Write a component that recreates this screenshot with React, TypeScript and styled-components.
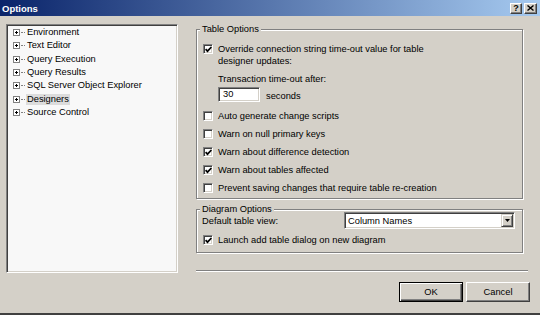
import React from 'react'
import styled, { createGlobalStyle, css } from 'styled-components'

const Face = '#d4d0c8'
const Shadow = '#808080'
const DarkShadow = '#404040'
const Light = '#ffffff'

const GlobalStyle = createGlobalStyle`
  html, body {
    margin: 0;
    padding: 0;
  }
  body {
    background: ${Face};
    font-family: "Liberation Sans", Arial, sans-serif;
    font-size: 9.3px;
    color: #000;
  }
`

const treeItems = [
  'Environment',
  'Text Editor',
  'Query Execution',
  'Query Results',
  'SQL Server Object Explorer',
  'Designers',
  'Source Control',
]

const tableChecks = [
  { label: 'Auto generate change scripts', checked: false },
  { label: 'Warn on null primary keys', checked: false },
  { label: 'Warn about difference detection', checked: true },
  { label: 'Warn about tables affected', checked: true },
  { label: 'Prevent saving changes that require table re-creation', checked: false },
]

export default function App() {
  return (
    <>
      <GlobalStyle />
      <Window>
        <TitleBar>
          <Title>Options</Title>
          <CaptionButtons>
            <CaptionButton $width={12}>
              <HelpGlyph>?</HelpGlyph>
            </CaptionButton>
            <CaptionButton $width={13}>
              <svg width="7" height="6" viewBox="0 0 7 6">
                <path d="M0.5 0.5 L6.5 5.5 M6.5 0.5 L0.5 5.5" stroke="#000" strokeWidth="1.4" />
              </svg>
            </CaptionButton>
          </CaptionButtons>
        </TitleBar>

        <Body>
          <Tree>
            {treeItems.map(item => (
              <TreeRow key={item}>
                <Expander>
                  <svg width="7" height="7" viewBox="0 0 7 7">
                    <rect x="0.5" y="0.5" width="6" height="6" fill="#fff" stroke={Shadow} />
                    <path d="M2 3.5 H5 M3.5 2 V5" stroke="#000" />
                  </svg>
                </Expander>
                <Connector />
                <TreeLabel $selected={item === 'Designers'}>{item}</TreeLabel>
              </TreeRow>
            ))}
          </Tree>

          <Pane>
            <Group $top={5} $padding="13px 0 4px 6px">
              <GroupTitle>Table Options</GroupTitle>
              <CheckRow>
                <CheckBox checked />
                <span>
                  Override connection string time-out value for table
                  <br />
                  designer updates:
                </span>
              </CheckRow>
              <Indented>
                <TimeoutLabel>Transaction time-out after:</TimeoutLabel>
                <TimeoutRow>
                  <TextField>30</TextField>
                  <span>seconds</span>
                </TimeoutRow>
              </Indented>
              <CheckList>
                {tableChecks.map(c => (
                  <CheckRow key={c.label}>
                    <CheckBox checked={c.checked} />
                    <span>{c.label}</span>
                  </CheckRow>
                ))}
              </CheckList>
            </Group>

            <Group $top={10} $padding="2px 0 6px 5px">
              <GroupTitle>Diagram Options</GroupTitle>
              <ViewRow>
                <span>Default table view:</span>
                <Combo>
                  <span>Column Names</span>
                  <ComboButton>
                    <svg width="5" height="3" viewBox="0 0 5 3">
                      <path d="M0 0 H5 L2.5 3 Z" fill="#000" />
                    </svg>
                  </ComboButton>
                </Combo>
              </ViewRow>
              <DiagramCheck>
                <CheckBox checked />
                <span>Launch add table dialog on new diagram</span>
              </DiagramCheck>
            </Group>

            <Separator />
          </Pane>
        </Body>

        <Footer>
          <PushButton $default $width={64}>OK</PushButton>
          <PushButton $width={64}>Cancel</PushButton>
        </Footer>
      </Window>
    </>
  )
}

function CheckBox({ checked }: { checked?: boolean }) {
  return (
    <Box>
      {checked && (
        <svg width="7" height="7" viewBox="0 0 7 7">
          <path d="M0.6 3.2 L2.5 5.2 L6.4 1" fill="none" stroke="#000" strokeWidth="1.7" />
        </svg>
      )}
    </Box>
  )
}

const sunken = css`
  border: 1px solid;
  border-color: ${Shadow} ${Light} ${Light} ${Shadow};
  box-shadow: inset 1px 1px 0 ${DarkShadow}, inset -1px -1px 0 ${Face};
`

const raised = css`
  border: 1px solid;
  border-color: ${Light} ${DarkShadow} ${DarkShadow} ${Light};
  box-shadow: inset -1px -1px 0 ${Shadow};
`

const Window = styled.div`
  width: 540px;
  height: 315px;
  box-sizing: border-box;
  display: flex;
  flex-direction: column;
  background: ${Face};
  border-bottom: 2px solid ${DarkShadow};
  overflow: hidden;
`

const TitleBar = styled.div`
  height: 16px;
  flex-shrink: 0;
  display: flex;
  align-items: center;
  padding: 0 3px 0 2px;
  background: linear-gradient(to right, #0a246a, #a6caf0);
`

const Title = styled.div`
  color: #fff;
  font-weight: bold;
  font-size: 9.5px;
`

const CaptionButtons = styled.div`
  margin-left: auto;
  display: flex;
  gap: 2px;
`

const CaptionButton = styled.div<{ $width: number }>`
  width: ${p => p.$width}px;
  height: 11px;
  box-sizing: border-box;
  display: flex;
  align-items: center;
  justify-content: center;
  background: ${Face};
  ${raised}
`

const HelpGlyph = styled.span`
  font-weight: bold;
  font-size: 9px;
  line-height: 9px;
`

const Body = styled.div`
  flex: 1;
  display: flex;
  gap: 18px;
  padding: 8px 12px 0 6px;
  min-height: 0;
`

const Tree = styled.div`
  width: 172px;
  box-sizing: border-box;
  background: #f8f8f8;
  padding: 1px 0 0 6px;
  ${sunken}
`

const TreeRow = styled.div`
  height: 13.33px;
  display: flex;
  align-items: center;
`

const Expander = styled.span`
  display: flex;
`

const Connector = styled.span`
  width: 4px;
  margin: 0 0 0 1px;
  border-top: 1px dotted ${Shadow};
`

const TreeLabel = styled.span<{ $selected?: boolean }>`
  margin-left: 1px;
  padding: 0 1px;
  line-height: 11px;
  background: ${p => (p.$selected ? '#dcdcdc' : 'transparent')};
`

const Pane = styled.div`
  flex: 1;
  display: flex;
  flex-direction: column;
`

const Group = styled.div<{ $top: number; $padding: string }>`
  position: relative;
  margin: ${p => p.$top}px 5px 0 0;
  padding: ${p => p.$padding};
  border: 1px solid ${Shadow};
  box-shadow: inset 1px 1px 0 ${Light}, 1px 1px 0 ${Light};
`

const GroupTitle = styled.div`
  position: absolute;
  top: -6px;
  left: 3px;
  padding: 0 2px;
  line-height: 11px;
  background: ${Face};
`

const CheckRow = styled.div`
  display: flex;
  align-items: flex-start;
  gap: 5px;
  line-height: 12px;
`

const Box = styled.span`
  width: 10px;
  height: 10px;
  margin-top: 1px;
  flex-shrink: 0;
  box-sizing: border-box;
  display: flex;
  align-items: center;
  justify-content: center;
  background: #fff;
  ${sunken}
`

const Indented = styled.div`
  margin: 6px 0 0 15px;
`

const TimeoutLabel = styled.div`
  line-height: 12px;
`

const TimeoutRow = styled.div`
  display: flex;
  align-items: flex-end;
  gap: 6px;
  margin-top: 2px;
  line-height: 12px;
`

const TextField = styled.div`
  width: 42px;
  height: 15px;
  box-sizing: border-box;
  padding-left: 4px;
  line-height: 13px;
  background: #fff;
  ${sunken}
`

const CheckList = styled.div`
  display: flex;
  flex-direction: column;
  gap: 6px;
  margin-top: 8px;
`

const ViewRow = styled.div`
  display: flex;
  align-items: center;
  padding-right: 7px;
`

const Combo = styled.div`
  margin-left: auto;
  width: 171px;
  height: 17px;
  box-sizing: border-box;
  display: flex;
  align-items: center;
  justify-content: space-between;
  padding: 1px 1px 1px 3px;
  background: #fff;
  ${sunken}
`

const ComboButton = styled.span`
  width: 12px;
  height: 13px;
  box-sizing: border-box;
  display: flex;
  align-items: center;
  justify-content: center;
  background: ${Face};
  border: 1px solid;
  border-color: ${Face} ${DarkShadow} ${DarkShadow} ${Face};
  box-shadow: inset 1px 1px 0 ${Light}, inset -1px -1px 0 ${Shadow};
`

const DiagramCheck = styled(CheckRow)`
  margin: 5px 0 0 1px;
`

const Separator = styled.div`
  margin-top: auto;
  margin-bottom: 1px;
  height: 0;
  border-top: 1px solid ${Shadow};
  border-bottom: 1px solid ${Light};
`

const Footer = styled.div`
  flex-shrink: 0;
  height: 40px;
  display: flex;
  justify-content: flex-end;
  align-items: flex-start;
  gap: 3px;
  padding: 9px 10px 0 0;
  box-sizing: border-box;
`

const PushButton = styled.div<{ $default?: boolean; $width: number }>`
  width: ${p => p.$width}px;
  height: 20px;
  box-sizing: border-box;
  display: flex;
  align-items: center;
  justify-content: center;
  background: ${Face};
  ${p =>
    p.$default
      ? css`
          border: 1px solid #000;
          box-shadow: inset 1px 1px 0 ${Light}, inset -1px -1px 0 ${DarkShadow},
            inset -2px -2px 0 ${Shadow};
        `
      : raised}
`
